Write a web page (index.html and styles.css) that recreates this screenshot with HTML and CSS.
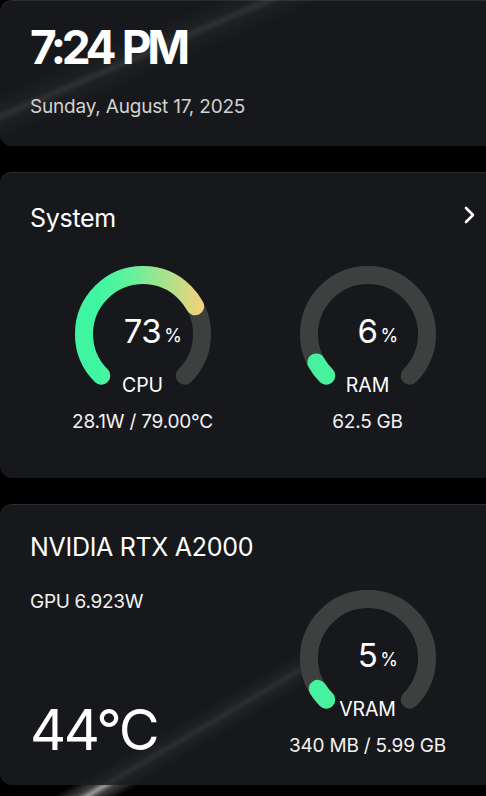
FILE: index.html
```html
<!DOCTYPE html>
<html lang="en">
<head>
<meta charset="utf-8">
<title>Dashboard</title>
<link rel="stylesheet" href="styles.css">
</head>
<body>
<div class="page">
  <div class="stack">
    <section class="card clock">
      <div class="time">7:24 PM</div>
      <div class="date">Sunday, August 17, 2025</div>
    </section>

    <section class="card system">
      <header class="card-head">
        <h2 class="card-title">System</h2>
        <svg class="chevron" viewBox="0 0 14 20" width="14" height="20"><path d="M4 3 L11 10 L4 17"/></svg>
      </header>
      <div class="gauges">
        <div class="metric">
          <div class="gauge">
            <svg class="ring" viewBox="0 0 136 136" width="136" height="136">
              <defs>
                <linearGradient id="cpuGrad" gradientUnits="userSpaceOnUse" x1="22" y1="0" x2="126" y2="0">
                  <stop offset="0" stop-color="#3ff5a1"/>
                  <stop offset="0.3" stop-color="#5ff29e"/>
                  <stop offset="1" stop-color="#f0d27a"/>
                </linearGradient>
              </defs>
              <path class="track" d="M26.28 109.72 A59 59 0 1 1 109.72 109.72"/>
              <path class="fill" stroke="url(#cpuGrad)" pathLength="100" stroke-dasharray="73 200" d="M26.28 109.72 A59 59 0 1 1 109.72 109.72"/>
            </svg>
            <div class="value">73<span class="pct">%</span></div>
            <div class="label">CPU</div>
          </div>
          <div class="sub">28.1W / 79.00°C</div>
        </div>
        <div class="metric">
          <div class="gauge">
            <svg class="ring" viewBox="0 0 136 136" width="136" height="136">
              <path class="track" d="M26.28 109.72 A59 59 0 1 1 109.72 109.72"/>
              <path class="fill green" pathLength="100" stroke-dasharray="6 200" d="M26.28 109.72 A59 59 0 1 1 109.72 109.72"/>
            </svg>
            <div class="value">6<span class="pct">%</span></div>
            <div class="label">RAM</div>
          </div>
          <div class="sub">62.5 GB</div>
        </div>
      </div>
    </section>

    <section class="card gpu">
      <h2 class="card-title">NVIDIA RTX A2000</h2>
      <div class="gpu-body">
        <div class="gpu-left">
          <div class="power">GPU 6.923W</div>
          <div class="temp">44°C</div>
        </div>
        <div class="metric">
          <div class="gauge">
            <svg class="ring" viewBox="0 0 136 136" width="136" height="136">
              <path class="track" d="M26.28 109.72 A59 59 0 1 1 109.72 109.72"/>
              <path class="fill green" pathLength="100" stroke-dasharray="5 200" d="M26.28 109.72 A59 59 0 1 1 109.72 109.72"/>
            </svg>
            <div class="value">5<span class="pct">%</span></div>
            <div class="label">VRAM</div>
          </div>
          <div class="sub">340 MB / 5.99 GB</div>
        </div>
      </div>
    </section>
  </div>
</div>
</body>
</html>
```
FILE: styles.css
```css
* { box-sizing: border-box; }

html, body {
  margin: 0;
  padding: 0;
  background: #000;
}

body {
  font-family: Inter, "Liberation Sans", sans-serif;
  color: #fff;
}

.page {
  width: 486px;
  height: 796px;
  overflow: hidden;
  background-color: #000;
  background-image:
    linear-gradient(156.6deg, transparent 84px, rgba(255,255,255,0.22) 101px, rgba(255,255,255,0.65) 107px, rgba(255,255,255,0.22) 113px, transparent 130px),
    linear-gradient(149.4deg, transparent 196px, rgba(255,255,255,0.25) 208px, rgba(255,255,255,0.6) 213px, rgba(255,255,255,0.25) 218px, transparent 230px);
  background-size: 320px 146px, 310px 196px;
  background-position: 0 0, 0 600px;
  background-repeat: no-repeat, no-repeat;
}

.stack {
  width: 510px;
  display: flex;
  flex-direction: column;
  gap: 26px;
}

.card {
  background: rgba(27, 28, 31, 0.86);
  border-radius: 12px;
  box-shadow: inset 0 1px 0 rgba(255,255,255,0.09);
  padding: 0 30px;
}

/* Clock */
.clock {
  padding-top: 24px;
  padding-bottom: 27px;
}

.time {
  font-size: 46px;
  font-weight: 700;
  line-height: 46px;
  letter-spacing: -4.4px;
  word-spacing: 3px;
}

.date {
  margin-top: 25px;
  font-size: 19px;
  line-height: 24px;
  color: #d2d2d2;
  letter-spacing: -0.2px;
}

/* Titles */
.card-title {
  margin: 0;
  font-size: 25px;
  line-height: 30px;
  font-weight: 400;
  letter-spacing: -0.3px;
}

.card-head {
  display: flex;
  justify-content: space-between;
  align-items: flex-start;
}

.chevron {
  margin-top: 2px;
  margin-right: 4px;
  fill: none;
  stroke: #fff;
  stroke-width: 2.6;
  stroke-linecap: round;
  stroke-linejoin: round;
}

/* System */
.system {
  padding-top: 31px;
  padding-bottom: 44px;
}

.gauges {
  margin-top: 33px;
  display: grid;
  grid-template-columns: 1fr 1fr;
}

.metric {
  display: flex;
  flex-direction: column;
  align-items: center;
}

.gauge {
  position: relative;
  width: 136px;
  height: 136px;
}

.ring {
  display: block;
}

.track,
.fill {
  fill: none;
  stroke-width: 18;
  stroke-linecap: round;
}

.track { stroke: #3e403f; }
.fill.green { stroke: #47f29f; }

.value {
  position: absolute;
  top: 49px;
  left: 50%;
  transform: translateX(-50%);
  font-size: 33px;
  line-height: 32px;
  letter-spacing: -0.5px;
}

.pct {
  position: absolute;
  left: 100%;
  bottom: 2px;
  margin-left: 3px;
  font-size: 18px;
  line-height: 18px;
}

.label {
  position: absolute;
  top: 107px;
  left: 0;
  right: 0;
  text-align: center;
  font-size: 19.5px;
  line-height: 24px;
  letter-spacing: -0.1px;
}

.sub {
  margin-top: 8px;
  font-size: 19px;
  line-height: 24px;
  letter-spacing: -0.2px;
  color: #f2f2f2;
  white-space: nowrap;
}

/* GPU */
.gpu {
  padding-top: 28px;
  padding-bottom: 27px;
}

.gpu-body {
  margin-top: 28px;
  display: grid;
  grid-template-columns: 1fr 1fr;
}

.gpu-left {
  display: flex;
  flex-direction: column;
  justify-content: space-between;
}

.power {
  font-size: 19px;
  line-height: 24px;
  letter-spacing: -0.3px;
  color: #f2f2f2;
}

.temp {
  font-size: 56px;
  line-height: 56px;
  letter-spacing: -2.5px;
}
```
